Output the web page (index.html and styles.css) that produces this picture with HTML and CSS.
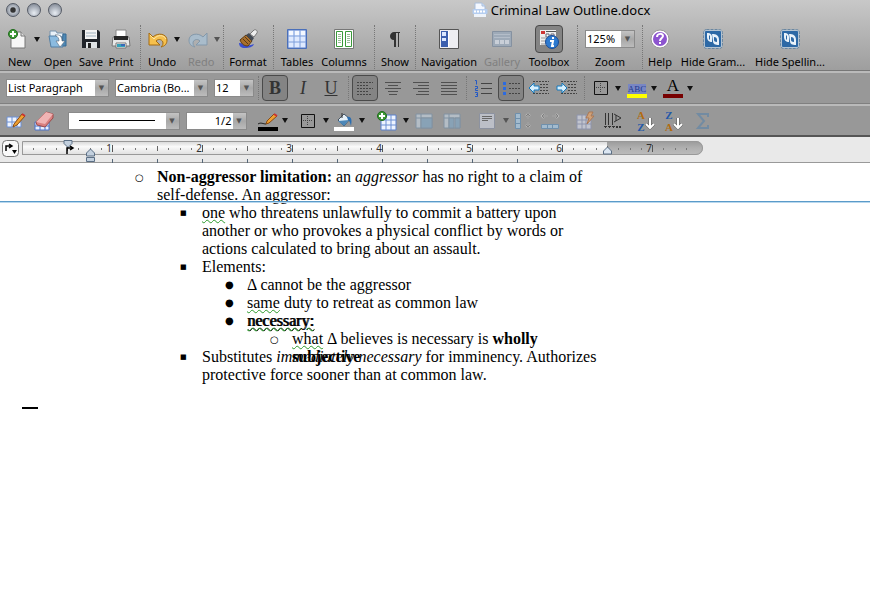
FILE: index.html
```
<!DOCTYPE html>
<html lang="en">
<head>
  <meta charset="UTF-8" />
  <meta name="viewport" content="width=device-width, initial-scale=1.0"/>
  <title>Criminal Law Outline.docx</title>
  <link rel="stylesheet" href="styles.css">
</head>
<body>
  <header class="window-head">
    <div class="titlebar">
      <div class="lights">
        <button class="light edited" aria-label="Close"></button>
        <button class="light" aria-label="Minimize"></button>
        <button class="light" aria-label="Zoom window"></button>
      </div>
      <h1 class="title">
        <svg width="16" height="16" viewBox="0 0 16 16"><path d="M3 1h7l3 3v8H3z" fill="#f4f8ff" stroke="#a9bedb"/><path d="M10 1v3h3" fill="#cfe0f7" stroke="#a9bedb"/><rect x="0.500" y="7" width="15" height="5" rx="1" fill="#b4cdf0"/><path d="M2 9.500h12" stroke="#fff" stroke-width="2" stroke-dasharray="2 1"/><path d="M2 12h12v3H2z" fill="#eef3fa"/></svg>
        Criminal Law Outline.docx
      </h1>
    </div>

    <div class="toolbar">
      <div class="split">
        <button class="tool">
          <span class="icon"><svg width="20" height="20" viewBox="0 0 20 20"><path d="M3 3h10l4 4v12H3z" fill="#f6f6f6" stroke="#777"/><path d="M13 3v4h4" fill="#ddd" stroke="#777"/><circle cx="5" cy="5" r="4.500" fill="#3d9a35" stroke="#226b1e"/><path d="M5 2v6M2 5h6" stroke="#fff" stroke-width="2"/></svg></span>
          New
        </button>
        <button class="drop" aria-label="New options"></button>
      </div>
      <button class="tool">
        <span class="icon"><svg width="20" height="20" viewBox="0 0 20 20"><path d="M2 2h6l1 2h6v4H2z" fill="#e9f1f8" stroke="#7793ad"/><path d="M15 5h3v12h-4z" fill="#4d88b5" stroke="#396b94"/><path d="M1 7h12l2 11H3z" fill="#8bbbe0" stroke="#527fa5"/><path d="M7 6c5-1 7 2 7 6h3l-5 6-4-6h3c0-3-1-4-4-6z" fill="#fff" stroke="#567" stroke-width=".6"/></svg></span>
        Open
      </button>
      <button class="tool">
        <span class="icon"><svg width="20" height="20" viewBox="0 0 20 20"><path d="M1 1h16l2 2v16H1z" fill="#20242a"/><path d="M4 1h12v9H4z" fill="#f3f3f3"/><path d="M5 4h10M5 7h10" stroke="#9fb1bf"/><path d="M5 13h11v6H5z" fill="#dfe3e6"/><path d="M7 14h3v5H7z" fill="#222"/></svg></span>
        Save
      </button>
      <button class="tool">
        <span class="icon"><svg width="20" height="20" viewBox="0 0 20 20"><path d="M5 1h10v8H5z" fill="#fff" stroke="#888"/><path d="M2 8h16l1 9H1z" fill="#e8e8e8" stroke="#777"/><path d="M3 7h14v4H3z" fill="#272727"/><path d="M5 14h10v5H5z" fill="#fff" stroke="#777"/><path d="M6 15h8v3H6z" fill="#35a2b9"/><path d="M10 15h4v2h-4z" fill="#3a69b8"/></svg></span>
        Print
      </button>
      <i class="sep"></i>
      <div class="split inset">
        <button class="tool">
          <span class="icon"><svg width="20" height="20" viewBox="0 0 20 20"><path d="M1 4v12h11l-4-4c3-3 7-1 7 2 0 2-1 3-2 4 4-1 6-3 6-7 0-6-9-8-14-3z" fill="#f6c04d" stroke="#a46b12"/><path d="M2 6l4 4c4-5 10-4 12 0" fill="none" stroke="#fde6a8"/></svg></span>
          Undo
        </button>
        <button class="drop" aria-label="Undo history"></button>
      </div>
      <div class="split inset off">
        <button class="tool" disabled>
          <span class="icon"><svg width="20" height="20" viewBox="0 0 20 20"><path d="M19 4v12H8l4-4c-3-3-7-1-7 2 0 2 1 3 2 4-4-1-6-3-6-7 0-6 9-8 14-3z" fill="#a9bccb" stroke="#8398aa"/></svg></span>
          Redo
        </button>
        <button class="drop" aria-label="Redo history" disabled></button>
      </div>
      <i class="sep"></i>
      <button class="tool">
        <span class="icon"><svg width="20" height="20" viewBox="0 0 20 20"><path d="M1 14c4 0 6 3 12 2l3-1c-1 3-5 4-9 4s-6-2-6-5z" fill="#3a4fd0"/><path d="M2 11l6-5 6 6-4 5c-3 0-6-1-8-6z" fill="#a9702d" stroke="#5b3a14"/><path d="M5 10l5 5M7 8l5 5" stroke="#5b3a14"/><path d="M8 6l3-2 5 5-2 3z" fill="#444b55"/><path d="M12 5l4-4c2-1 4 1 3 3l-3 4z" fill="#eee" stroke="#777"/></svg></span>
        Format
      </button>
      <i class="sep"></i>
      <button class="tool">
        <span class="icon"><svg width="20" height="20" viewBox="0 0 20 20"><path d="M1 1h18v18H1z" fill="#dfeaff" stroke="#5a7fc9"/><path d="M1 7h18M1 13h18M7 1v18M13 1v18" stroke="#7d9edb"/><path d="M2 2h4v4H2zM8 2h4v4H8zM14 2h4v4h-4z" fill="#f4f8ff"/><path d="M.5.500h19v19H.5z" fill="none" stroke="#4a6fb9"/></svg></span>
        Tables
      </button>
      <button class="tool">
        <span class="icon"><svg width="20" height="20" viewBox="0 0 20 20"><path d="M.5.500h19v19H.5z" fill="#fff" stroke="#777"/><path d="M2.500 2.500h6v15h-6zM11.500 2.500h6v15h-6z" fill="#fff" stroke="#3a9a3a"/><path d="M4 5.500h3M4 7.500h3M4 9.500h3M4 11.500h3M4 13.500h3M13 5.500h3M13 7.500h3M13 9.500h3M13 11.500h3M13 13.500h3" stroke="#9b9"/></svg></span>
        Columns
      </button>
      <i class="sep"></i>
      <button class="tool">
        <span class="icon"><svg width="20" height="20" viewBox="0 0 20 20"><path d="M15 3v1h-1v14h-1V4h-2v14h-2v-7c-3 0-4-2-4-4s2-4 4-4z" fill="#333"/></svg></span>
        Show
      </button>
      <i class="sep"></i>
      <button class="tool">
        <span class="icon"><svg width="20" height="20" viewBox="0 0 20 20"><path d="M.5.500h19v19H.5z" fill="#eeeef2" stroke="#555"/><path d="M2 2h7v16H2z" fill="#3c5fae"/><path d="M3 3h4v4H3zM3 9h4v3H3z" fill="#dbe7ff"/><path d="M9 2h1v16H9z" fill="#fff"/></svg></span>
        Navigation
      </button>
      <button class="tool off" disabled>
        <span class="icon"><svg width="20" height="20" viewBox="0 0 20 20"><path d="M.5 2.500h19v15H.5z" fill="#9eaab8" stroke="#8591a0"/><path d="M2 5.500h16M2 8.500h16" stroke="#b4bdc9"/><path d="M3 11h4v4H3zM8 11h4v4H8zM13 11h4v4h-4z" fill="#c9cfd8"/></svg></span>
        Gallery
      </button>
      <button class="tool">
        <span class="icon pressed"><svg width="20" height="20" viewBox="0 0 20 20"><path d="M1 1h16v15H1z" fill="#eee"/><path d="M2 2h4v3H2z" fill="#c33"/><path d="M7 2h10v1H7z" fill="#555"/><path d="M7 5h3v3H7zM12 5h3v3h-3z" fill="#fff" stroke="#667"/><path d="M2 9h5M2 12h5M2 15h5" stroke="#999"/><circle cx="13" cy="13" r="6.500" fill="#2d7ad0" stroke="#1a4c95"/><path d="M11 12h3l-1 5h2M13 9h2" stroke="#fff" stroke-width="2" fill="none"/></svg></span>
        Toolbox
      </button>
      <i class="sep"></i>
      <div class="tool">
        <span class="icon"><span class="combo zoom"><select id="zoom"><option>125%</option></select></span></span>
        <label for="zoom">Zoom</label>
      </div>
      <i class="sep"></i>
      <button class="tool">
        <span class="icon"><svg width="20" height="20" viewBox="0 0 20 20"><circle cx="10" cy="10" r="9" fill="#fff" stroke="#999"/><circle cx="10" cy="10" r="7" fill="#8d55cf"/><path d="M7 8c0-4 6-4 6-1 0 2-3 2-3 5M10 13v2" fill="none" stroke="#fff" stroke-width="2"/></svg></span>
        Help
      </button>
      <button class="tool">
        <span class="icon"><svg width="20" height="20" viewBox="0 0 20 20"><rect x=".5" y=".5" width="19" height="19" rx="3" fill="#b5c4d2" stroke="#6b869f" stroke-dasharray="3 1"/><rect x="2" y="2" width="16" height="16" rx="1" fill="#2d69a6"/><path d="M4 4c4 0 5 2 5 4v5c-3 0-5-2-5-5zM9 5c4 0 7 1 7 6v5c-4 0-6-1-6-4z" fill="#e9f2fa"/><path d="M11 8c2 0 3 1 3 3v2c-2 0-3-1-3-2zM6 6l1 1v4l-1-1z" fill="#2d69a6"/></svg></span>
        Hide Gram...
      </button>
      <button class="tool">
        <span class="icon"><svg width="20" height="20" viewBox="0 0 20 20"><rect x=".5" y=".5" width="19" height="19" rx="3" fill="#b5c4d2" stroke="#6b869f" stroke-dasharray="3 1"/><rect x="2" y="2" width="16" height="16" rx="1" fill="#2d69a6"/><path d="M4 4c4 0 5 2 5 4v5c-3 0-5-2-5-5zM9 5c4 0 7 1 7 6v5c-4 0-6-1-6-4z" fill="#e9f2fa"/><path d="M11 8c2 0 3 1 3 3v2c-2 0-3-1-3-2zM6 6l1 1v4l-1-1z" fill="#2d69a6"/></svg></span>
        Hide Spellin...
      </button>
    </div>
  </header>

  <div class="bar format-bar">
    <div class="combos">
      <span class="combo style"><select aria-label="Style"><option>List Paragraph</option></select></span>
      <span class="combo font"><select aria-label="Font"><option>Cambria (Bo...</option></select></span>
      <span class="combo size"><select aria-label="Font size"><option>12</option></select></span>
    </div>
    <i class="sep"></i>
    <button class="btn letter pressed"><b>B</b></button>
    <button class="btn letter"><i>I</i></button>
    <button class="btn letter"><u>U</u></button>
    <i class="sep"></i>
    <button class="btn pressed" aria-label="Align left"><svg width="18" height="18" viewBox="0 0 18 18"><path d="M1 3.500h16M1 6.500h11M1 9.500h16M1 12.500h11M1 15.500h14" stroke="#444" stroke-dasharray="2 1"/></svg></button>
    <button class="btn" aria-label="Align center"><svg width="18" height="18" viewBox="0 0 18 18"><path d="M1 3.500h16M4 6.500h10M1 9.500h16M4 12.500h10M5 15.500h8" stroke="#505050"/></svg></button>
    <button class="btn" aria-label="Align right"><svg width="18" height="18" viewBox="0 0 18 18"><path d="M1 3.500h16M6 6.500h11M1 9.500h16M6 12.500h11M4 15.500h13" stroke="#505050"/></svg></button>
    <button class="btn" aria-label="Justify"><svg width="18" height="18" viewBox="0 0 18 18"><path d="M1 3.500h16M1 6.500h16M1 9.500h16M1 12.500h16M1 15.500h16" stroke="#505050"/></svg></button>
    <i class="sep"></i>
    <button class="btn" aria-label="Numbered list"><svg width="18" height="18" viewBox="0 0 18 18"><path d="M7 4.500h11M7 9.500h11M7 14.500h11" stroke="#444"/><path d="M1 1.500h1.500v4M1 7.500h2.500v2H1.500v2h2.500M1 13.500h2.500v4H1M2 15.500h1.500" fill="none" stroke="#2459c4"/></svg></button>
    <button class="btn pressed" aria-label="Bulleted list"><svg width="18" height="18" viewBox="0 0 18 18"><path d="M7 4.500h11M7 9.500h11M7 14.500h11" stroke="#444" stroke-dasharray="2 1"/><path d="M1 3h3v3H1zM1 8h3v3H1zM1 13h3v3H1z" fill="#2c6be0"/></svg></button>
    <button class="btn" aria-label="Decrease indent"><svg width="20" height="18" viewBox="0 0 20 18"><path d="M4 2.500h16M11 5.500h9M11 8.500h9M11 11.500h9M4 14.500h16" stroke="#444" stroke-dasharray="2 1"/><path d="M0 9l5-5v3h5v4H5v3z" fill="#d7f0ff" stroke="#1479bd"/></svg></button>
    <button class="btn" aria-label="Increase indent"><svg width="20" height="18" viewBox="0 0 20 18"><path d="M4 2.500h16M11 5.500h9M11 8.500h9M11 11.500h9M4 14.500h16" stroke="#444" stroke-dasharray="2 1"/><path d="M10 9L5 4v3H0v4h5v3z" fill="#d7f0ff" stroke="#1479bd"/></svg></button>
    <i class="sep"></i>
    <button class="btn" aria-label="Borders"><svg width="14" height="14" viewBox="0 0 14 14"><path d="M.5.500h13v13H.5z" fill="none" stroke="#111"/><path d="M2 6.500h10M6.500 2v10" stroke="#444" stroke-dasharray="1 1"/></svg></button>
    <button class="drop" aria-label="Border options"></button>
    <button class="btn swatch yellow"><span class="abc">ABC</span></button>
    <button class="drop" aria-label="Highlight color"></button>
    <button class="btn swatch red"><span class="glyph">A</span></button>
    <button class="drop" aria-label="Font color"></button>
  </div>

  <div class="bar table-bar">
    <button class="btn" aria-label="Draw table"><svg width="20" height="18" viewBox="0 0 20 18"><path d="M1 5h14v10H1z" fill="#eef4ff" stroke="#6d90d4"/><path d="M1 10h14M6 5v10M11 5v10" stroke="#6d90d4"/><path d="M8 12l8-10 3 2-8 9-4 2z" fill="#f0a030" stroke="#8a4b10"/><path d="M16 2l3 2" stroke="#c33" stroke-width="2"/></svg></button>
    <button class="btn" aria-label="Erase"><svg width="20" height="20" viewBox="0 0 20 20"><path d="M1 11h14v8H1z" fill="#e7efff" stroke="#4c73c8"/><path d="M1 15h14M6 11v8M11 11v8" stroke="#4c73c8"/><path d="M2 11L12 1l7 2v4l-8 9-8-2z" fill="#d98080" stroke="#9c4a4a"/><path d="M2 11L12 1l7 2-8 10z" fill="#f0b4b4"/></svg></button>
    <div class="combos">
      <span class="combo line"><select aria-label="Line style"><option></option></select></span>
      <span class="combo weight"><select aria-label="Line weight"><option>1/2</option></select></span>
    </div>
    <button class="btn swatch black" aria-label="Pen color"><svg width="20" height="14" viewBox="0 0 20 14"><path d="M0 11c3-2 5 0 8 0" fill="none" stroke="#222"/><path d="M8 11l1-3 7-7 3 2-8 7z" fill="#f0a030" stroke="#8a4b10"/><path d="M16 1l3 2" stroke="#c33" stroke-width="2"/></svg></button>
    <button class="drop" aria-label="Pen colors"></button>
    <i class="gap"></i>
    <button class="btn" aria-label="Cell borders"><svg width="14" height="14" viewBox="0 0 14 14"><path d="M.5.500h13v13H.5z" fill="none" stroke="#111"/><path d="M2 6.500h10M6.500 2v10" stroke="#444" stroke-dasharray="1 1"/></svg></button>
    <button class="drop" aria-label="Cell border options"></button>
    <button class="btn swatch white" aria-label="Shading"><svg width="18" height="14" viewBox="0 0 18 14"><path d="M3 7l6-6 6 5-6 7z" fill="#e6f0f8" stroke="#456"/><path d="M3 8l11-1-5 6z" fill="#4c87b8"/><path d="M12 4c5-1 5 4 4 9-1-3-1-5-3-6" fill="#2a6db0"/><path d="M7 5V0" stroke="#333"/></svg></button>
    <button class="drop" aria-label="Shading colors"></button>
    <i class="gap"></i>
    <button class="btn" aria-label="Insert table"><svg width="20" height="20" viewBox="0 0 20 20"><path d="M4 4h15v15H4z" fill="#eef4ff" stroke="#5b80cc"/><path d="M4 9h15M4 14h15M9 4v15M14 4v15" stroke="#6d90d4"/><circle cx="5" cy="5" r="4.500" fill="#3d9a35" stroke="#226b1e"/><path d="M5 2v6M2 5h6" stroke="#fff" stroke-width="2"/></svg></button>
    <button class="drop" aria-label="Insert options"></button>
    <button class="btn off" aria-label="Merge cells" disabled><svg width="18" height="18" viewBox="0 0 18 18"><path d="M1 2h16v14H1z" fill="#c0cdd9" stroke="#7890a6"/><path d="M1 6h16M6 2v14" stroke="#7890a6"/><path d="M6 6h11v10H6z" fill="#82a7c4" stroke="#7890a6"/></svg></button>
    <button class="btn off" aria-label="Split cells" disabled><svg width="18" height="18" viewBox="0 0 18 18"><path d="M1 2h16v14H1z" fill="#c0cdd9" stroke="#7890a6"/><path d="M1 6h16M6 2v14" stroke="#7890a6"/><path d="M6 6h5v10H6zM12 6h5v10h-5z" fill="#82a7c4" stroke="#7890a6"/></svg></button>
    <i class="gap"></i>
    <button class="btn off" aria-label="Cell alignment" disabled><svg width="18" height="18" viewBox="0 0 18 18"><path d="M1.500 1.500h15v15h-15z" fill="#ccd0dc" stroke="#8890a4"/><path d="M4 4.500h10M4 6.500h10M4 8.500h6" stroke="#555"/></svg></button>
    <button class="drop off" aria-label="Alignment options" disabled></button>
    <button class="btn off" aria-label="Distribute rows" disabled><svg width="18" height="18" viewBox="0 0 18 18"><path d="M1.500 1.500h5v15h-5zM1.500 6.500h5M1.500 11.500h5" fill="#a9cbe6" stroke="#5f8db5"/><path d="M14 1v6M12 4l2-2 2 2M14 10v6M12 13l2 2 2-2" fill="none" stroke="#ccc" stroke-width="2"/><path d="M14 1v6M12 4l2-2 2 2M14 10v6M12 13l2 2 2-2" fill="none" stroke="#777"/></svg></button>
    <button class="btn off" aria-label="Distribute columns" disabled><svg width="20" height="18" viewBox="0 0 20 18"><path d="M1.500 12.500h17v4h-17zM7.500 12v5M12.500 12v5" fill="#a9cbe6" stroke="#5f8db5"/><path d="M2 4h6M4 2L2 4l2 2M12 4h6M16 2l2 2-2 2" fill="none" stroke="#ccc" stroke-width="2"/><path d="M2 4h6M4 2L2 4l2 2M12 4h6M16 2l2 2-2 2" fill="none" stroke="#777"/></svg></button>
    <i class="gap"></i>
    <button class="btn off" aria-label="AutoFormat" disabled><svg width="20" height="18" viewBox="0 0 20 18"><path d="M2 3h14v14H2z" fill="#d3d7e5" stroke="#8a93b5"/><path d="M2 8h14M2 12h14M7 3v14M11 3v14" stroke="#8a93b5"/><path d="M14 0h4l-2 4h3l-7 8 2-6h-3z" fill="#e8a56a" stroke="#b06a3a"/></svg></button>
    <button class="btn" aria-label="Text direction"><svg width="18" height="18" viewBox="0 0 18 18"><path d="M1.500 1v12M4.500 1v12M8.500 1v12" stroke="#333"/><path d="M10 2l7 4-7 4M12 3v6" fill="none" stroke="#333"/><path d="M0 14h3v1H2v1H1v-1H0zM4 14h3v1H6v1H5v-1H4zM8 14h3v1h-1v1H9v-1H8zM12 14h2v2h-2zM15 14h2v2h-2z" fill="#333"/></svg></button>
    <i class="gap"></i>
    <button class="btn sort" aria-label="Sort ascending"><span class="az"><b class="orange">A</b><b class="blue">Z</b></span><svg width="10" height="12" viewBox="0 0 10 12"><path d="M5 0v10M1 6l4 4 4-4" fill="none" stroke="#555" stroke-width="3"/><path d="M5 0v10M1 6l4 4 4-4" fill="none" stroke="#fff" stroke-width="2"/></svg></button>
    <button class="btn sort" aria-label="Sort descending"><span class="az"><b class="blue">Z</b><b class="orange">A</b></span><svg width="10" height="12" viewBox="0 0 10 12"><path d="M5 0v10M1 6l4 4 4-4" fill="none" stroke="#555" stroke-width="3"/><path d="M5 0v10M1 6l4 4 4-4" fill="none" stroke="#fff" stroke-width="2"/></svg></button>
    <button class="btn off" aria-label="AutoSum" disabled><svg width="14" height="18" viewBox="0 0 14 18"><path d="M12 5V2H2l6 7-6 7h10v-3" fill="none" stroke="#6286a6" stroke-width="2"/></svg></button>
  </div>

  <div class="ruler">
    <svg id="ruler" width="710" height="27" viewBox="0 0 710 27">
      <defs>
        <linearGradient id="live" x1="0" y1="0" x2="0" y2="1"><stop offset="0" stop-color="#d4d4d4"/><stop offset=".4" stop-color="#fafafa"/><stop offset="1" stop-color="#dedede"/></linearGradient>
        <linearGradient id="dead" x1="0" y1="0" x2="0" y2="1"><stop offset="0" stop-color="#9a9a9a"/><stop offset=".5" stop-color="#b0b0b0"/><stop offset="1" stop-color="#bcbcbc"/></linearGradient>
      </defs>
      <rect x="2.500" y="3.500" width="16" height="16" rx="4" fill="#fafafa" stroke="#777"/>
      <path d="M6 14V9h5M9 7l3 2-3 2" fill="none" stroke="#000" stroke-width="1.500"/>
      <path d="M12 13h5l-2.500 4z"/>
      <path d="M23 4h584v14H23z" fill="url(#live)"/>
      <path d="M607 4h89a7 7 0 0 1 0 14h-89z" fill="url(#dead)"/>
      <path d="M22.500 18V4.500H696a6.500 6.500 0 0 1 0 13H23" fill="none" stroke="#999"/>
      <g id="ticks"></g>
      <path d="M64 3.500h8v3l-4 4-4-4z" fill="#c3d0de" stroke="#5b6f85"/>
      <path d="M67 17v-6h5M70 9l3 2-3 2" fill="none" stroke="#000" stroke-width="1.500"/>
      <path d="M90.500 12l4 4v3h-8v-3zM86.500 20.500h8v4h-8z" fill="#c3d0de" stroke="#5b6f85"/>
      <path d="M607.500 10l4 4v3h-8v-3z" fill="#dbe6f2" stroke="#5b6f85"/>
    </svg>
  </div>

  <main class="page">
    <ul class="outline">
      <li class="ring"><b>Non-aggressor limitation:</b> an <em>aggressor</em> has no right to a claim of<br>self-defense. An aggressor:
        <ul>
          <li class="square"><span class="grammar">one</span> who threatens unlawfully to commit a battery upon<br>another or who provokes a physical conflict by words or<br>actions calculated to bring about an assault.</li>
          <li class="square">Elements:
            <ul>
              <li class="disc">Δ cannot be the aggressor</li>
              <li class="disc"><span class="grammar">same</span> duty to retreat as common law</li>
              <li class="disc"><span class="grammar heavy">necessary:</span>
                <ul>
                  <li class="ring one-line"><span class="grammar">what</span> Δ believes is necessary is <b>wholly<br>subjective</b></li>
                </ul>
              </li>
            </ul>
          </li>
          <li class="square">Substitutes <em>immediately necessary</em> for imminency. Authorizes<br>protective force sooner than at common law.</li>
        </ul>
      </li>
    </ul>
    <div class="page-line"></div>
    <hr class="end-mark">
  </main>

  <script>
    // inch = 90px, eight divisions per inch
    const ticks = document.getElementById('ticks');
    let out = '';
    for (let i = 1; i < 60; i++) {
      const x = Math.round(22 + i * 11.25);
      if (i % 8 === 0) {
        out += `<path d="M${x}.5 8v7" stroke="#555"/><text x="${x}" y="15" text-anchor="end">${i / 8}</text>`;
      } else if (i % 4 === 0) {
        out += `<path d="M${x}.5 9v5" stroke="#666"/>`;
      } else if (i !== 4) {
        out += `<path d="M${x}.5 11v2" stroke="#777"/>`;
      }
    }
    for (let x = 112; x <= 562; x += 45) {
      out += `<path d="M${x}.5 22v4" stroke="#556677"/>`;
    }
    ticks.innerHTML = out;
  </script>
</body>
</html>
```
FILE: styles.css
```
* { margin: 0; padding: 0; box-sizing: border-box; }
body {
  background: #fff;
  color: #000;
  font-family: "Noto Sans", sans-serif;
  font-size: 11px;
}
button {
  background: none;
  border: none;
  font: inherit;
  color: inherit;
}
svg { display: block; flex: none; overflow: visible; }

.window-head {
  background: linear-gradient(#c8c8c8, #9e9e9e);
  border-bottom: 1px solid #777;
}
.titlebar {
  display: grid;
  grid-template-columns: 1fr auto 1fr;
  height: 20px;
  padding: 0 6px;
}
.lights { display: flex; gap: 7px; align-items: center; }
.light {
  width: 14px;
  height: 14px;
  border-radius: 50%;
  border: 1px solid #555b66;
  background: radial-gradient(circle at 50% 75%, #e8edf3, #8b929e 80%);
}
.edited { background: radial-gradient(circle, #333 25%, #b9bfc8 40%, #8b929e 80%); }
.title {
  display: flex;
  align-items: center;
  gap: 3px;
  grid-column: 2;
  font-size: 13px;
  font-weight: normal;
  margin-left: 252px;
  white-space: nowrap;
}

.toolbar {
  display: grid;
  grid-template-columns: 32px 36px 30px 30px 8px 40px 36px 6px 44px 6px 42px 52px 8px 34px 6px 62px 44px 50px 6px 60px 4px 32px 74px 80px;
  padding: 5px 0 0 8px;
  height: 50px;
}
.tool {
  display: flex;
  flex-direction: column;
  align-items: center;
  line-height: 17px;
  white-space: nowrap;
}
.icon {
  display: flex;
  align-items: center;
  justify-content: center;
  height: 28px;
}
.split { display: flex; }
.split .tool { width: 26px; align-items: flex-start; }
.inset { padding-left: 4px; }
.off { color: #808080; }
.toolbar .drop { width: 6px; height: 28px; }
.toolbar .sep { height: 44px; }
.pressed {
  width: 28px;
  border: 1px solid #4a4a4a;
  border-radius: 4px;
  background: #848484;
}
.sep {
  justify-self: center;
  width: 1px;
  border-left: 1px dotted #777;
}
.drop {
  display: flex;
  align-items: center;
  justify-content: center;
  width: 8px;
}
.drop::after {
  content: "";
  border: 3px solid transparent;
  border-top: 5px solid #111;
  border-bottom: none;
}
.off.drop::after, .off .drop::after { border-top-color: #555; }

.combo {
  display: flex;
  height: 18px;
  background: #fff;
  border: 1px solid #8a8a8a;
}
.combo::after {
  content: "▼";
  width: 13px;
  background: linear-gradient(#c4c4c4, #a8a8a8 50%, #bcbcbc);
  color: #555;
  font: 7px/16px "DejaVu Sans", sans-serif;
  text-align: center;
}
.combo select {
  appearance: none;
  flex: 1;
  min-width: 0;
  padding: 0 1px;
  border: none;
  background: none;
  font: inherit;
  line-height: 16px;
}
.zoom { width: 50px; }
.style { width: 103px; }
.font { width: 93px; }
.size { width: 40px; }
.line { width: 112px; }
.line select { background: linear-gradient(#000, #000) center / 76px 1px no-repeat; }
.weight { width: 61px; }
.weight select { text-align: right; text-align-last: right; }
.combos { display: flex; gap: 6px; }

.bar {
  align-items: center;
  height: 33px;
  background: #989898;
  border-top: 2px solid #bababa;
  border-bottom: 1px solid #808080;
}
.format-bar { display: flex; gap: 2px; padding-left: 6px; }
.format-bar .sep { width: 4px; height: 24px; margin-left: 2px; margin-right: -2px; }
.format-bar .drop { margin-left: -2px; }
.table-bar {
  display: grid;
  grid-template-columns: 26px 30px 196px 26px 8px 5px 28px 8px 28px 8px 6px 30px 8px 28px 28px 6px 30px 8px 26px 28px 6px 30px 26px 6px 28px 28px 30px;
  justify-items: center;
  padding-left: 3px;
  border-bottom: 2px solid #555;
}
.btn {
  display: flex;
  align-items: center;
  justify-content: center;
  width: 26px;
  height: 26px;
}
.table-bar .off svg { opacity: .7; }
.letter { font: 18px "Liberation Serif", serif; color: #333; }
.swatch {
  flex-direction: column;
  justify-content: flex-end;
  padding: 0 3px 3px;
}
.swatch::after { content: ""; width: 20px; height: 4px; }
.yellow::after { background: #ff0; }
.red::after { background: #700; }
.black::after { background: #000; }
.white::after { background: #fff; }
.abc {
  background: #7886c4;
  color: #223a8c;
  font: 9px/10px "Liberation Serif", serif;
}
.glyph { font: 17px/16px "Liberation Serif", serif; }
.sort svg { margin-top: 6px; }
.az {
  display: flex;
  flex-direction: column;
  font: 11px/12px "Liberation Serif", serif;
}
.orange { color: #b36b10; }
.blue { color: #2458a8; }

.ruler {
  height: 26px;
  background: #e9e9e9;
  border-bottom: 1px solid #999;
}
.ruler text { font-size: 10px; fill: #333; }

.page {
  position: relative;
  padding-top: 5px;
  font-family: "Liberation Serif", serif;
  font-size: 16px;
  line-height: 18px;
  white-space: nowrap;
}
.outline { padding-left: 112px; }
ul { list-style: none; }
li { padding-left: 45px; }
li ul { margin-left: -45px; padding-left: 45px; }
li::before {
  display: inline-block;
  width: 22px;
  margin-left: -22px;
  font-family: "DejaVu Sans", sans-serif;
  font-size: 10px;
  line-height: 10px;
  vertical-align: 1px;
}
.ring::before { content: "○"; }
.square::before { content: "■"; font-size: 7px; vertical-align: 3px; }
.disc::before { content: "●"; vertical-align: 2px; }
.one-line { height: 18px; }
.grammar { text-decoration: underline wavy #2c9a2c 1px; }
.heavy { text-shadow: 1px 0 #000; }
.page-line {
  position: absolute;
  left: 0;
  right: 0;
  top: 38px;
  height: 2px;
  background: #5b9bc9;
  border-bottom: 1px solid #b9d8ee;
}
.end-mark {
  width: 16px;
  margin: 23px 0 0 22px;
  border: none;
  border-top: 2px solid #000;
}
```
